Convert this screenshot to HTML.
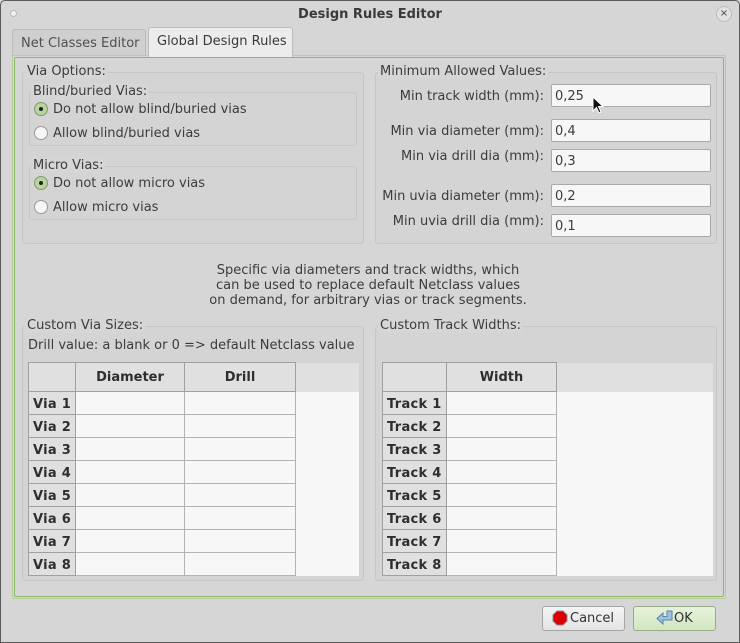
<!DOCTYPE html>
<html><head><style>
*{box-sizing:border-box;margin:0;padding:0}
body{width:740px;height:643px;background:#d6d6d6;font-family:"DejaVu Sans","Liberation Sans",sans-serif;font-size:13px;color:#3c3c3c;position:relative;overflow:hidden}
.a{position:absolute}
.win{left:0;top:0;width:740px;height:643px;border:1px solid #5a5a5a;border-radius:5px 5px 0 0}
.title{left:0;top:7px;width:740px;text-align:center;font-weight:bold;font-size:13px;color:#3a3a3a}
.grp{border:1px solid #c6c6c6;border-radius:3px;background:#d4d4d4}
.lbl{background:#d6d6d6;padding:0 2px;line-height:15px;white-space:nowrap}
.radio{width:14px;height:14px;border-radius:50%;border:1px solid #9a9a9a;background:#f6f6f6}
.radio.on{background:#b8d4a0;border-color:#7f9a6c}
.radio.on::after{content:"";position:absolute;left:4px;top:4px;width:4px;height:4px;border-radius:50%;background:#222}
.inp{left:551px;width:160px;height:23px;border:1px solid #a9a9a9;border-radius:2px;background:#f7f7f7;padding:4px 0 0 3px}
.rl{width:200px;text-align:right;white-space:nowrap}
table{border-collapse:collapse;position:absolute}
td{border:1px solid #b4b4b4;height:23px;padding:0;background:#f7f7f7}
td.h{background:#e0e0e0;font-weight:bold;text-align:center;color:#2e2e2e;border-color:#a0a0a0;padding-top:1px}
td.r{background:#e0e0e0;font-weight:bold;padding:2px 0 0 4px;color:#2e2e2e;border-color:#a0a0a0;white-space:nowrap;letter-spacing:0.3px}
td.e{border:none;background:#f7f7f7}
td.eh{border:none;background:#e0e0e0}
.btn{height:25px;border:1px solid #a6a6a6;border-radius:3px;background:linear-gradient(#f4f4f4,#e4e4e4);top:606px}
</style></head><body>
<div class="a win"></div>
<div class="a title">Design Rules Editor</div>
<div class="a" style="left:10px;top:10px;width:7px;height:7px;border-radius:50%;background:#f0f0f0;border:1px solid #bbb"></div>
<div class="a" style="left:716px;top:6px;width:16px;height:16px;border-radius:50%;border:1px solid #bcbcbc;background:#e2e2e2;font-size:10px;text-align:center;line-height:14px;color:#444">×</div>
<div class="a" style="left:12px;top:29px;width:134px;height:27px;border:1px solid #bcbcbc;border-bottom:none;border-radius:3px 3px 0 0;background:#cfcfcf;padding:6px 0 0 8px;color:#505050">Net Classes Editor</div>
<div class="a" style="left:148px;top:27px;width:145px;height:30px;border:1px solid #bcbcbc;border-bottom:none;border-radius:3px 3px 0 0;background:#ececec;padding:6px 0 0 8px;color:#3a3a3a;z-index:2">Global Design Rules</div>
<div class="a" style="left:12px;top:55px;width:714px;height:544px;border:1px solid #b7cc9f;border-radius:2px;background:#d6d6d6"></div>
<div class="a" style="left:14px;top:57px;width:710px;height:540px;border:1px solid #8fb866;border-radius:2px"></div>
<div class="a grp" style="left:22px;top:72px;width:342px;height:172px"></div>
<div class="a lbl" style="left:25px;top:64px">Via Options:</div>
<div class="a grp" style="left:29px;top:92px;width:328px;height:54px"></div>
<div class="a lbl" style="left:31px;top:84px">Blind/buried Vias:</div>
<div class="a radio on" style="left:34px;top:102px"></div><div class="a" style="left:53px;top:102px">Do not allow blind/buried vias</div>
<div class="a radio" style="left:34px;top:126px"></div><div class="a" style="left:53px;top:126px">Allow blind/buried vias</div>
<div class="a grp" style="left:29px;top:166px;width:328px;height:54px"></div>
<div class="a lbl" style="left:31px;top:158px">Micro Vias:</div>
<div class="a radio on" style="left:34px;top:176px"></div><div class="a" style="left:53px;top:176px">Do not allow micro vias</div>
<div class="a radio" style="left:34px;top:200px"></div><div class="a" style="left:53px;top:200px">Allow micro vias</div>
<div class="a grp" style="left:375px;top:72px;width:342px;height:172px"></div>
<div class="a lbl" style="left:378px;top:64px">Minimum Allowed Values:</div>
<div class="a rl" style="left:344px;top:89px">Min track width (mm):</div><div class="a inp" style="top:84px">0,25</div>
<div class="a rl" style="left:344px;top:124px">Min via diameter (mm):</div><div class="a inp" style="top:119px">0,4</div>
<div class="a rl" style="left:344px;top:149px">Min via drill dia (mm):</div><div class="a inp" style="top:149px">0,3</div>
<div class="a rl" style="left:344px;top:189px">Min uvia diameter (mm):</div><div class="a inp" style="top:184px">0,2</div>
<div class="a rl" style="left:344px;top:214px">Min uvia drill dia (mm):</div><div class="a inp" style="top:214px">0,1</div>
<svg class="a" style="left:592px;top:96px" width="14" height="20" viewBox="0 0 14 20"><path d="M1 1 L1 15 L4.5 11.5 L7 17 L9 16 L6.5 10.5 L11 10.5 Z" fill="#111" stroke="#fff" stroke-width="1"/></svg>
<div class="a" style="left:-2px;top:263px;width:740px;text-align:center;line-height:15px">Specific via diameters and track widths, which<br>can be used to replace default Netclass values<br>on demand, for arbitrary vias or track segments.</div>
<div class="a grp" style="left:22px;top:326px;width:342px;height:255px"></div>
<div class="a lbl" style="left:25px;top:318px">Custom Via Sizes:</div>
<div class="a" style="left:28px;top:338px">Drill value: a blank or 0 =&gt; default Netclass value</div>
<table style="left:28px;top:362px;width:331px">
<tr><td class="h" style="width:47px;height:29px"></td><td class="h" style="width:109px">Diameter</td><td class="h" style="width:111px">Drill</td><td class="eh"></td></tr>
<tr><td class="r">Via 1</td><td></td><td></td><td class="e"></td></tr>
<tr><td class="r">Via 2</td><td></td><td></td><td class="e"></td></tr>
<tr><td class="r">Via 3</td><td></td><td></td><td class="e"></td></tr>
<tr><td class="r">Via 4</td><td></td><td></td><td class="e"></td></tr>
<tr><td class="r">Via 5</td><td></td><td></td><td class="e"></td></tr>
<tr><td class="r">Via 6</td><td></td><td></td><td class="e"></td></tr>
<tr><td class="r">Via 7</td><td></td><td></td><td class="e"></td></tr>
<tr><td class="r">Via 8</td><td></td><td></td><td class="e"></td></tr>
</table>
<div class="a grp" style="left:375px;top:326px;width:342px;height:255px"></div>
<div class="a lbl" style="left:378px;top:318px">Custom Track Widths:</div>
<table style="left:382px;top:362px;width:331px">
<tr><td class="h" style="width:64px;height:29px"></td><td class="h" style="width:110px">Width</td><td class="eh"></td></tr>
<tr><td class="r">Track 1</td><td></td><td class="e"></td></tr>
<tr><td class="r">Track 2</td><td></td><td class="e"></td></tr>
<tr><td class="r">Track 3</td><td></td><td class="e"></td></tr>
<tr><td class="r">Track 4</td><td></td><td class="e"></td></tr>
<tr><td class="r">Track 5</td><td></td><td class="e"></td></tr>
<tr><td class="r">Track 6</td><td></td><td class="e"></td></tr>
<tr><td class="r">Track 7</td><td></td><td class="e"></td></tr>
<tr><td class="r">Track 8</td><td></td><td class="e"></td></tr>
</table>
<div class="a btn" style="left:542px;width:83px"></div>
<svg class="a" style="left:552px;top:610px" width="16" height="16" viewBox="0 0 16 16"><path d="M5 1 H11 L15 5 V11 L11 15 H5 L1 11 V5 Z" fill="#d00" stroke="#888" stroke-width="1"/></svg>
<div class="a" style="left:570px;top:611px;color:#333">Cancel</div>
<div class="a btn" style="left:633px;width:83px;background:linear-gradient(#e6f2da,#d2e6c0);border-color:#9aab8a"></div>
<svg class="a" style="left:655px;top:609px" width="20" height="18" viewBox="0 0 20 18"><path d="M12 2 H17 V11 H8 V15 L2 9.5 L8 4 V7.5 H12 Z" fill="#9cc0e0" stroke="#5a84ad" stroke-width="1"/></svg>
<div class="a" style="left:674px;top:611px;color:#333">OK</div>
</body></html>
